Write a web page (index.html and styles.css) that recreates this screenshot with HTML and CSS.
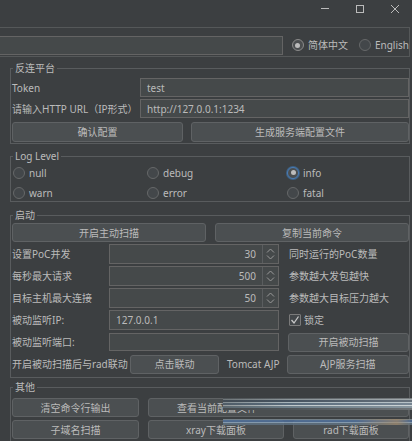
FILE: index.html
```html
<!DOCTYPE html>
<html>
<head>
<meta charset="utf-8">
<link rel="stylesheet" href="styles.css">
</head>
<body>
<div class="titlebar">
  <span class="wbtn"><svg width="10" height="10" viewBox="0 0 10 10"><path d="M1 4.5H9" stroke="#bbbbbb" stroke-width="1"/></svg></span>
  <span class="wbtn"><svg width="10" height="10" viewBox="0 0 10 10"><rect x="1.5" y="1.5" width="7" height="7" fill="none" stroke="#bbbbbb" stroke-width="1"/></svg></span>
  <span class="wbtn"><svg width="10" height="10" viewBox="0 0 10 10"><path d="M1 1L9 9M9 1L1 9" stroke="#bbbbbb" stroke-width="1"/></svg></span>
</div>

<div class="toppanel">
  <div class="field topfield"></div>
  <div class="radio r-zh"><span class="dot on"></span>简体中文</div>
  <div class="radio r-en"><span class="dot"></span>English</div>
</div>

<section class="group g1">
  <div class="gtitle">反连平台</div>
  <div class="frow"><span class="lbl w128">Token</span><div class="field grow">test</div></div>
  <div class="frow"><span class="lbl w128">请输入HTTP URL（IP形式）</span><div class="field grow">http://127.0.0.1:1234</div></div>
  <div class="brow b1">
    <div class="btn w171">确认配置</div>
    <div class="btn grow">生成服务端配置文件</div>
  </div>
</section>

<section class="group g2">
  <div class="gtitle">Log Level</div>
  <div class="radiogrid">
    <div class="radio"><span class="dot"></span>null</div>
    <div class="radio"><span class="dot"></span>debug</div>
    <div class="radio"><span class="dot sel"></span>info</div>
    <div class="radio"><span class="dot"></span>warn</div>
    <div class="radio"><span class="dot"></span>error</div>
    <div class="radio"><span class="dot"></span>fatal</div>
  </div>
</section>

<section class="group g3">
  <div class="gtitle">启动</div>
  <div class="brow b3">
    <div class="btn half">开启主动扫描</div>
    <div class="btn half">复制当前命令</div>
  </div>
  <div class="rows">
    <div class="row">
      <span class="lbl w97">设置PoC并发</span>
      <div class="spin"><span class="val">30</span><span class="arr"><svg width="9" height="14" viewBox="0 0 9 14"><path d="M1 5.5L4.5 2L8 5.5M1 8.5L4.5 12L8 8.5" fill="none" stroke="#9a9a9a" stroke-width="1"/></svg></span></div>
      <span class="note">同时运行的PoC数量</span>
    </div>
    <div class="row">
      <span class="lbl w97">每秒最大请求</span>
      <div class="spin"><span class="val">500</span><span class="arr"><svg width="9" height="14" viewBox="0 0 9 14"><path d="M1 5.5L4.5 2L8 5.5M1 8.5L4.5 12L8 8.5" fill="none" stroke="#9a9a9a" stroke-width="1"/></svg></span></div>
      <span class="note">参数越大发包越快</span>
    </div>
    <div class="row">
      <span class="lbl w97">目标主机最大连接</span>
      <div class="spin"><span class="val">50</span><span class="arr"><svg width="9" height="14" viewBox="0 0 9 14"><path d="M1 5.5L4.5 2L8 5.5M1 8.5L4.5 12L8 8.5" fill="none" stroke="#9a9a9a" stroke-width="1"/></svg></span></div>
      <span class="note">参数越大目标压力越大</span>
    </div>
    <div class="row">
      <span class="lbl w97">被动监听IP:</span>
      <div class="field w170">127.0.0.1</div>
      <div class="check"><span class="box"><svg width="10" height="10" viewBox="0 0 10 10"><path d="M1.5 5L4 8L8.5 1.5" fill="none" stroke="#c8c8c8" stroke-width="1.3"/></svg></span>锁定</div>
    </div>
    <div class="row">
      <span class="lbl w97">被动监听端口:</span>
      <div class="field w170 short"></div>
      <div class="btn grow ml9">开启被动扫描</div>
    </div>
    <div class="row">
      <span class="lbl w118">开启被动扫描后与rad联动</span>
      <div class="btn w89">点击联动</div>
      <span class="tomcat">Tomcat AJP</span>
      <div class="btn grow">AJP服务扫描</div>
    </div>
  </div>
</section>

<section class="group g4">
  <div class="gtitle">其他</div>
  <div class="brow b4">
    <div class="btn w127">清空命令行输出</div>
    <div class="btn grow cfg">查看当前配置文件</div>
  </div>
  <div class="brow b4">
    <div class="btn w127">子域名扫描</div>
    <div class="btn w136">xray下载面板</div>
    <div class="btn grow">rad下载面板</div>
  </div>
</section>

<div class="streak s1"></div>
<div class="streak s2"></div>
</body>
</html>
```

FILE: styles.css
```css
* { box-sizing: border-box; }
html, body { margin: 0; padding: 0; }
body {
  position: relative;
  width: 412px;
  height: 441px;
  overflow: hidden;
  background: #3c3f41;
  color: #bbbbbb;
  font-family: "Noto Sans", "Noto Sans CJK SC", sans-serif;
  font-size: 10px;
  line-height: 14px;
}

.titlebar {
  height: 27px;
  display: flex;
  justify-content: flex-end;
  padding-top: 4px;
}
.wbtn {
  width: 35px;
  height: 10px;
  display: flex;
  justify-content: center;
}
.wbtn svg { display: block; }

.toppanel {
  height: 30px;
  margin-right: 2px;
  border: 1px solid #555859;
  border-left: 0;
  display: flex;
  align-items: flex-start;
  padding-top: 8px;
}
.topfield {
  margin-left: -2px;
  width: 290px;
  height: 18px;
}
.r-zh { margin-left: 9px; height: 18px; }
.r-en { margin-left: 11px; height: 18px; }

.field {
  height: 19px;
  background: #45494a;
  border: 1px solid #646464;
  padding: 0 6px;
  display: flex;
  align-items: center;
  white-space: nowrap;
}
.grow { flex: 1; }

.radio {
  display: flex;
  align-items: center;
  gap: 4px;
  white-space: nowrap;
}
.dot {
  width: 12px;
  height: 12px;
  border-radius: 50%;
  border: 1px solid #666869;
  background: #43474a;
  position: relative;
  flex: none;
}
.dot.on::after, .dot.sel::after {
  content: "";
  position: absolute;
  left: 2.5px;
  top: 2.5px;
  width: 5px;
  height: 5px;
  border-radius: 50%;
  background: #bcbcbc;
}
.dot.on { border-color: #8a8a8a; background: #4b4e50; }
.dot.sel {
  border-color: #4a7cb5;
  box-shadow: 0 0 0 1px #3d6185;
  background: #4b4e50;
}

/* titled group boxes */
.group {
  margin: 0 2px 0 10px;
  padding: 0 0 0 1px;
  border: 1px solid #595c5e;
}
.gtitle {
  margin-top: -9px;
  margin-left: 1px;
  width: fit-content;
  height: 16px;
  line-height: 16px;
  padding: 0 2px;
  background: #3c3f41;
}

.g1 {
  margin-top: 11px;
  padding-bottom: 1px;
  display: flex;
  flex-direction: column;
  gap: 2px;
}
.frow { display: flex; align-items: center; }
.lbl { white-space: nowrap; flex: none; }
.w128 { width: 128px; }
.w97 { width: 97px; }
.w118 { width: 118px; }

.brow { display: flex; gap: 8px; }
.b1 { margin-top: 2px; height: 20px; }
.b3 { height: 19px; gap: 9px; }
.b4 { height: 19px; gap: 9px; }

.btn {
  height: 100%;
  background: #4b4f51;
  border: 1px solid #5f6264;
  border-radius: 3px;
  display: flex;
  align-items: center;
  justify-content: center;
  white-space: nowrap;
  overflow: hidden;
}
.w171 { width: 171px; flex: none; }
.half { flex: 1; }
.w127 { width: 127px; flex: none; }
.w136 { width: 136px; flex: none; }
.w89 { width: 89px; flex: none; }
.ml9 { margin-left: 9px; }
.cfg { justify-content: flex-start; padding-left: 28px; }

.g2 { margin-top: 12px; }
.radiogrid {
  display: grid;
  grid-template-columns: 134px 140px 1fr;
  grid-auto-rows: 17px;
  row-gap: 3px;
  padding-left: 1px;
}

.g3 { margin-top: 13px; padding-bottom: 3px; }
.rows {
  margin-top: 2px;
  display: flex;
  flex-direction: column;
  gap: 2px;
}
.row {
  display: flex;
  align-items: center;
  height: 20px;
}
.spin {
  width: 170px;
  height: 20px;
  display: flex;
  background: #45494a;
  border: 1px solid #646464;
  flex: none;
}
.val {
  flex: 1;
  text-align: right;
  padding-right: 6px;
  line-height: 18px;
}
.arr {
  width: 16px;
  border-left: 1px solid #5a5d5f;
  display: flex;
  align-items: center;
  justify-content: center;
}
.arr svg { display: block; }
.note { margin-left: 10px; white-space: nowrap; }
.w170 { width: 170px; flex: none; height: 20px; }
.short { height: 18px; }
.check {
  margin-left: 10px;
  display: flex;
  align-items: center;
  gap: 3px;
}
.box {
  width: 12px;
  height: 12px;
  border: 1px solid #7a7a7a;
  background: #43474a;
  border-radius: 1px;
  display: flex;
  align-items: center;
  justify-content: center;
}
.box svg { display: block; }
.row .btn { height: 19px; }
.tomcat { margin: 0 7px 0 8px; white-space: nowrap; }

.g4 {
  margin-top: 9px;
  padding-bottom: 2px;
  display: flex;
  flex-direction: column;
  gap: 3px;
}

.streak {
  position: absolute;
  left: 223px;
  width: 189px;
}
.s1 {
  top: 398px;
  height: 12px;
  background:
    linear-gradient(to right, rgba(60,63,65,0.35), rgba(255,255,255,0) 35%, rgba(255,255,255,0.18)),
    linear-gradient(to bottom, #5a6064 0 1px, #8c9599 1px 2px, #465360 2px 4px, #a9b6bc 4px 5px, #5a6c7c 5px 7px, #c0c8cb 7px 8px, #6e7f8a 8px 10px, #4e5458 10px 12px);
}
.s2 {
  top: 419px;
  height: 6px;
  opacity: 0.85;
  background:
    linear-gradient(to right, rgba(60,63,65,0) 70%, rgba(190,150,100,0.6) 92%, rgba(60,63,65,0)),
    linear-gradient(to bottom, #7d8b94 0 1px, #4f6f9a 1px 3px, #8ea6bd 3px 4px, #5e7080 4px 6px);
}
```
